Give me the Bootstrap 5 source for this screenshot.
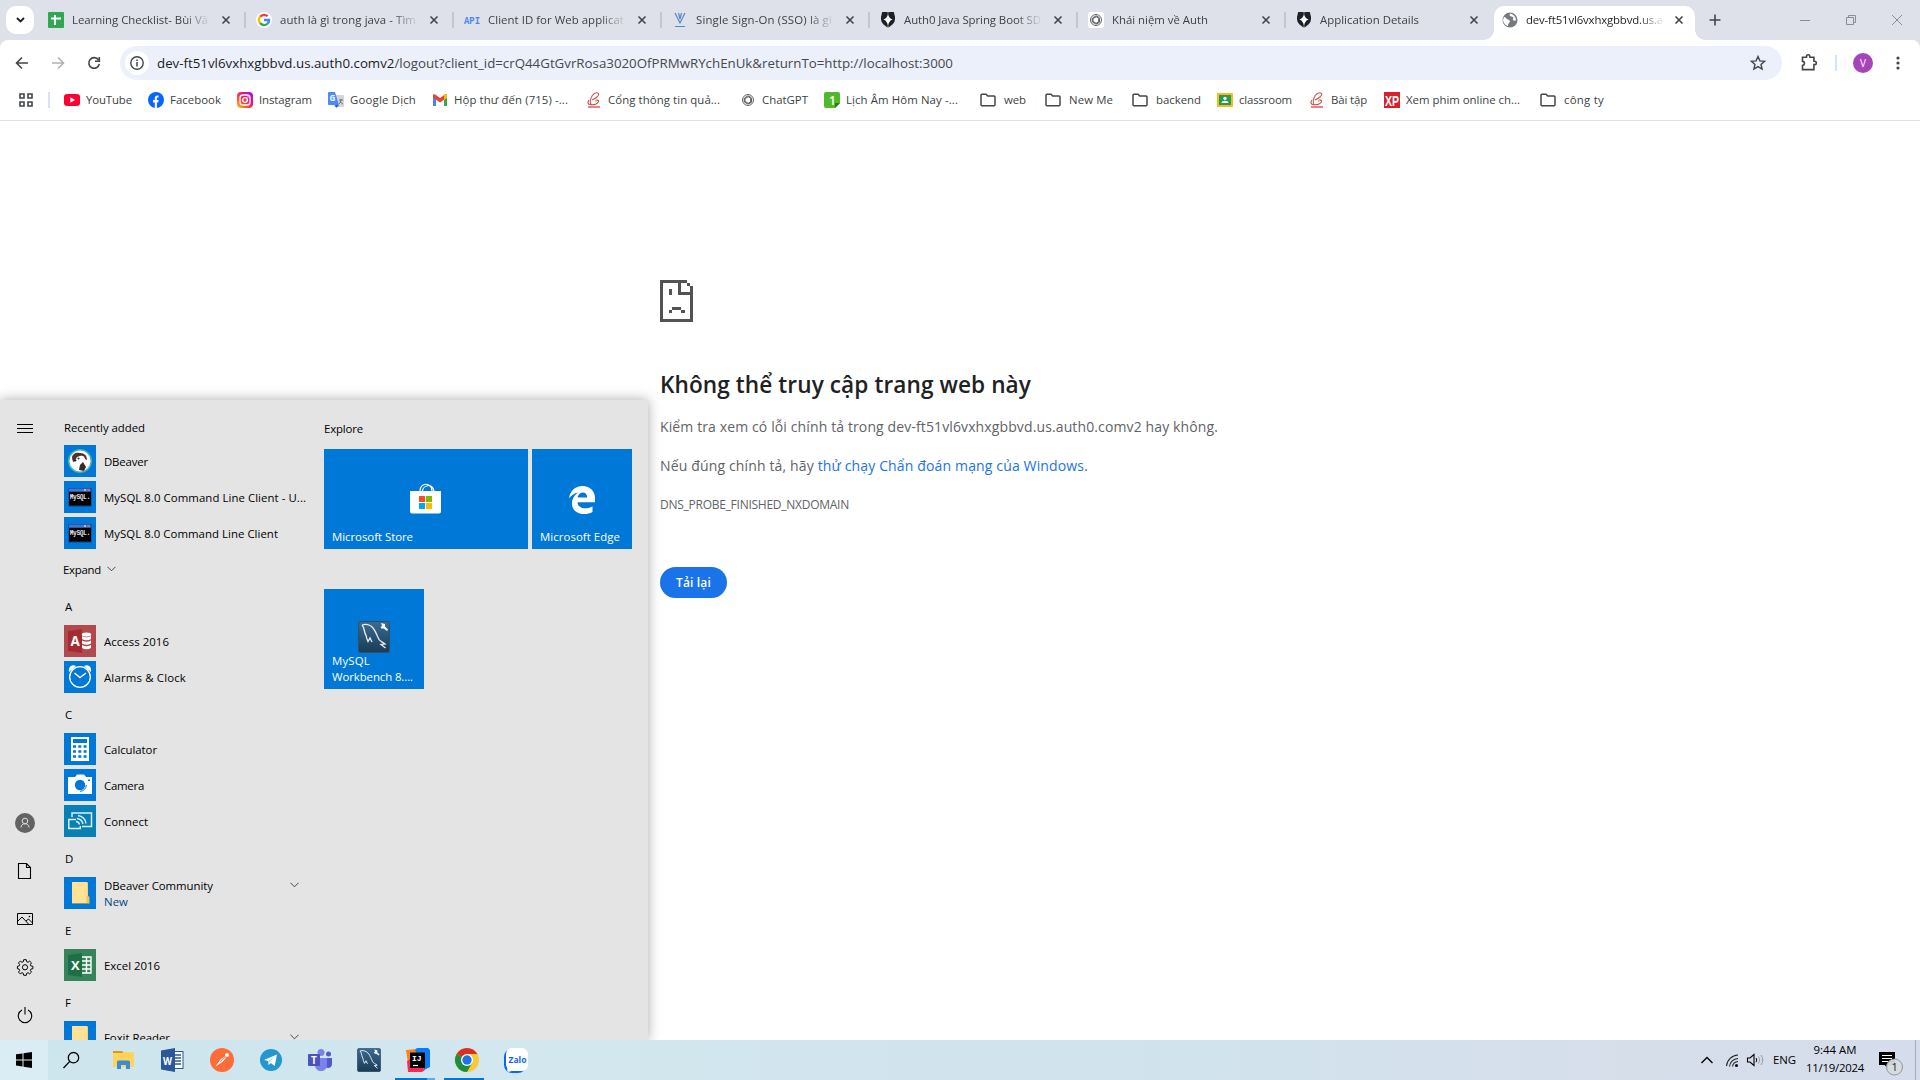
<!DOCTYPE html>
<html lang="vi">
<head>
<meta charset="utf-8">
<title>dev-ft51vl6vxhxgbbvd.us.auth0.comv2</title>
<link rel="stylesheet" href="https://cdn.jsdelivr.net/npm/bootstrap@5.3.0/dist/css/bootstrap.min.css">
<style>
body{width:1920px;height:1080px;overflow:hidden;font-family:"Open Sans","Noto Sans",sans-serif;font-size:11.4px;line-height:16px;color:#3c3f43;background:#fff}
svg{display:block;flex:none;overflow:visible}
[data-w]{display:inline-block;white-space:nowrap}
.tabstrip{height:40px;background:#dee1e9;padding-left:6px}
.tab-search{width:28px;height:28px;border-radius:10px;background:#fff;margin-right:3px}
.tab{width:208px;height:28px;padding-left:11px;padding-right:14px;gap:8px}
.tab.sep{position:relative}
.tab.sep::after{content:"";position:absolute;right:-1px;top:6px;width:2px;height:16px;background:#c3c7d0;border-radius:1px}
.tab-label{width:137px;-webkit-mask-image:linear-gradient(90deg,#000 112px,transparent 139px)}
.tab-on{width:201px;height:34px;margin-left:1px;padding-left:8px;padding-right:11px;padding-bottom:6px;background:#fff;border-radius:10px 10px 0 0;color:#1f1f1f;position:relative;align-self:flex-end}
.tab-on::before,.tab-on::after{content:"";position:absolute;bottom:0;width:10px;height:10px}
.tab-on::before{left:-10px;background:radial-gradient(circle at 0 0,transparent 9.5px,#fff 10px)}
.tab-on::after{right:-10px;background:radial-gradient(circle at 100% 0,transparent 9.5px,#fff 10px)}
.toolband{background:#dee1e9}
.toolbar-row{height:46px;background:#fff;border-radius:8px 8px 0 0;padding:0 16px 0 14px}
.omni{width:1662px;height:34px;border-radius:17px;background:#ecf0fa;padding:0 16px 0 5px;font-size:13.3px;color:#45484d}
.omni b{font-weight:400;color:#1b1c1e}
.site-info{width:24px;height:24px;border-radius:50%;background:#fff;margin-right:8px}
.vbar{width:2px;height:16px;background:#d3e3fd}
.profile{width:20px;height:20px;border-radius:50%;background:#a744b9;color:#fff;font-size:10px}
.bookmarks{height:35px;padding:0 0 6px 19px;border-bottom:1px solid #dfe1e5;box-sizing:border-box;font-size:11.4px}
.bookmarks .bm{gap:6px}
.bookmarks .fold{gap:8px}
.errpage{padding:159px 0 0 660px}
.errpage h1{font-size:22.6px;line-height:30px;font-weight:600;color:#202124;margin:48px 0 17px}
.errpage p{font-size:14px;line-height:20px;margin:0 0 19px;color:#5f6368}
.errpage a{color:#1a73e8;text-decoration:none}
.reload{width:67px;height:31px;border-radius:16px;background:#1a73e8;color:#fff;font-size:12px;font-weight:600;margin-top:52px}
.start{position:absolute;left:0;top:400px;width:648px;height:640px;background:#e4e4e4;color:#000;overflow:hidden;z-index:2}
.start-shade{position:absolute;left:0;top:400px;width:648px;height:640px;box-shadow:0 0 12px rgba(0,0,0,.34);z-index:1}
.rail{width:50px;padding:24px 0 17px}
.apps{width:274px;padding-left:14px;padding-top:20px}
.row36{height:36px;gap:8px;flex:none}
.row36>span{padding-top:1px}
.letter{padding:4px 0 0 1px}
.tile32{width:32px;height:32px;background:#0078d7}
.tiles{padding-top:21px;width:308px}
.tile{background:#0078d7;color:#fff;height:100px;padding:0 8px 4px}
.taskbar{position:absolute;left:0;top:1040px;width:1920px;height:40px;background:linear-gradient(90deg,#cde5ed 0,#d3e7ef 30%,#d0e3ed 60%,#d6deea 85%,#d5ddec 100%);color:#000;z-index:3}
.tb{width:49px;height:40px}
.tb.running{position:relative}
.tb.running::after{content:"";position:absolute;left:4px;bottom:0;width:40px;height:2px;background:#0078d7}
.tb.multi::after{background:linear-gradient(90deg,#0078d7 32px,#61a9e0 32px)}
</style>
<script src="https://cdn.jsdelivr.net/npm/bootstrap@5.3.0/dist/js/bootstrap.bundle.min.js"></script>
</head>
<body>
<svg width="0" height="0" class="position-absolute">
<defs>
<symbol id="x" viewBox="0 0 10 10"><path d="M1.500 1.500l7 7M8.500 1.500l-7 7" stroke="#42464b" stroke-width="1.600"/></symbol>
<symbol id="auth" viewBox="0 0 16 16"><path d="M2.200 0h11.600L15 5c.3 3-.6 5.500-2.600 7.500L8 16l-4.400-3.500C1.600 10.500.7 8 1 5z" fill="#1f2023"/><path d="M8 2c.7 3.200 2 4.700 4.600 5.300C10 8.500 8.700 10.500 8 14c-.7-3.500-2-5.500-4.600-6.700C6 6.700 7.300 5.200 8 2z" fill="#fff"/><path d="M7.600 0h.8L8 3zM8 13l.7 3H7.300z" fill="#dee1e9"/></symbol>
<symbol id="gpt" viewBox="0 0 16 16"><g fill="none" stroke="#4d4f52" stroke-width="1"><circle cx="8" cy="8" r="6.300"/><g id="petal"><path d="M4.600 5.200V9.600L8 11.600M4.600 5.200L8.200 3.200 12 5.400"/></g><use href="#petal" transform="rotate(120 8 8)"/><use href="#petal" transform="rotate(240 8 8)"/></g></symbol>
<symbol id="folder" viewBox="0 0 16 16"><path d="M1 3.200a1 1 0 011-1h4l1.700 1.900h6.300a1 1 0 011 1v7.700a1 1 0 01-1 1H2a1 1 0 01-1-1z" fill="none" stroke="#474747" stroke-width="1.500"/></symbol>
<symbol id="chev" viewBox="0 0 10 6"><path d="M.5.5L5 5 9.500.5" fill="none" stroke="#333" stroke-width="1"/></symbol>
<symbol id="ptit" viewBox="0 0 16 16"><path d="M12.500 1.500C10-.5 6.500 2 5 6c-1 3-1 5.500.5 7M12.500 1.500c1 2-2 4.500-6.500 6.500" fill="none" stroke="#d05a5a" stroke-width="1.100"/><path d="M3 8c-1.500 2-1.500 4 1 4.500 4 .8 8-.5 8.500-3 .2-1.500-1.500-2-3-.5" fill="none" stroke="#c24a4c" stroke-width="1.100"/><path d="M2 15h12" stroke="#d33" stroke-width="1.200"/><path d="M9 8.500h2" stroke="#eab52b" stroke-width="1.600"/></symbol>
<symbol id="dolphin" viewBox="0 0 32 32"><defs><linearGradient id="dg" x2="0" y2="1"><stop stop-color="#3c6b93"/><stop offset="1" stop-color="#1a3b54"/></linearGradient></defs><rect x=".5" y=".5" width="31" height="31" rx="2.500" fill="url(#dg)" stroke="#28506f"/><path d="M4 4c4-1.200 8-.2 11 3 3 3.500 4 8 6 11.500 1 1.800 3.500 2.500 6 4.500l-4 .4 4.500 3.600M4 4c2 2 2 5 3 8 .6 2 1.700 3 1.600 5l1.400 3.500 2-3.500 2 4" fill="none" stroke="#e4eef5" stroke-width="1.300"/><path d="M23 2l1 3-1.500 1 1.200 1.800 2-.2L29 10l1-1.500-3-3L27 3z" fill="#f4f8fa"/></symbol>
<symbol id="mysqlcmd" viewBox="0 0 32 32"><rect x="4.500" y="7" width="23" height="18.500" fill="#173f80"/><rect x="5" y="7.500" width="21.500" height="3" fill="#3d77ce"/><rect x="20" y="8" width="2" height="2" fill="#a8bce5"/><rect x="23.500" y="8" width="2.500" height="2" fill="#e26a4b"/><rect x="5" y="11" width="22" height="13.500" fill="#000"/><text x="6" y="17.500" font-size="6.500" font-family="Liberation Mono,monospace" fill="#fff" stroke="#fff" stroke-width=".2" textLength="20" lengthAdjust="spacingAndGlyphs">MySQL.</text></symbol>
<symbol id="yfold" viewBox="0 0 32 32"><path d="M8 6h16v13l1.500 1v6.500H8z" fill="#f0c45c"/><path d="M8 5h15.500v13.500l-1 1.200V26H8z" fill="#ffe294"/></symbol>
</defs></svg>

<header>
<div class="tabstrip d-flex align-items-center">
 <div class="tab-search d-flex align-items-center justify-content-center"><svg width="9" height="6" viewBox="0 0 9 6"><path d="M1 1l3.500 3.500L8 1" fill="none" stroke="#1f1f1f" stroke-width="1.800"/></svg></div>
 <div class="tab sep d-flex align-items-center"><svg width="16" height="16"><rect width="16" height="16" rx="1" fill="#2fa84f"/><path d="M7 3v10M3 6.500h10" stroke="#fff" stroke-width="2"/></svg><div class="tab-label"><span data-w="136">Learning Checklist- Bùi Vă</span></div><svg class="ms-auto" width="10" height="10"><use href="#x"/></svg></div>
 <div class="tab sep d-flex align-items-center"><svg width="16" height="16"><circle cx="8" cy="8" r="8" fill="#fff"/><g fill="none" stroke-width="2.400"><path d="M11.600 4.200A5 5 0 004.200 4.800" stroke="#ea4335"/><path d="M4.200 4.800a5 5 0 00-.1 6.300" stroke="#fbbc05"/><path d="M4.100 11.100a5 5 0 007.200.8" stroke="#34a853"/><path d="M11.300 11.900A5 5 0 0013 8H8" stroke="#4285f4"/></g></svg><div class="tab-label"><span data-w="136">auth là gì trong java - Tìm</span></div><svg class="ms-auto" width="10" height="10"><use href="#x"/></svg></div>
 <div class="tab sep d-flex align-items-center"><svg width="16" height="16"><text x="0" y="12" font-family="Liberation Mono,monospace" font-weight="700" font-size="11" fill="#4d86ec" textLength="16" lengthAdjust="spacingAndGlyphs">API</text></svg><div class="tab-label"><span data-w="136">Client ID for Web applicat</span></div><svg class="ms-auto" width="10" height="10"><use href="#x"/></svg></div>
 <div class="tab sep d-flex align-items-center"><svg width="16" height="16"><path d="M3 1l5 10 5-10M6.500 1L8 7l1.500-6M3 14.500h10" fill="none" stroke="#5488c7" stroke-width="1.200"/></svg><div class="tab-label"><span data-w="136">Single Sign-On (SSO) là gì</span></div><svg class="ms-auto" width="10" height="10"><use href="#x"/></svg></div>
 <div class="tab sep d-flex align-items-center"><svg width="16" height="16"><use href="#auth"/></svg><div class="tab-label"><span data-w="137">Auth0 Java Spring Boot SD</span></div><svg class="ms-auto" width="10" height="10"><use href="#x"/></svg></div>
 <div class="tab sep d-flex align-items-center"><svg width="16" height="16"><rect width="16" height="16" rx="3" fill="#fff"/><use href="#gpt" x="1" y="1" width="14" height="14"/></svg><div class="tab-label"><span data-w="96">Khái niệm về Auth</span></div><svg class="ms-auto" width="10" height="10"><use href="#x"/></svg></div>
 <div class="tab d-flex align-items-center"><svg width="16" height="16"><use href="#auth"/></svg><div class="tab-label"><span data-w="99">Application Details</span></div><svg class="ms-auto" width="10" height="10"><use href="#x"/></svg></div>
 <div class="tab tab-on d-flex align-items-center"><svg width="16" height="16"><circle cx="8" cy="8" r="7.500" fill="#76797d"/><path d="M2 5c2 0 2 2 4 2.500S8.500 10 7 11s-.5 3-1.500 3C3 13 1 10.500 1 8M8 1.500c-1 2 0 3 1.500 3S12 6 11 7s1 2 3 1.500c0-3-2-6-6-7" fill="#fff"/></svg><div class="tab-label"><span data-w="137">dev-ft51vl6vxhxgbbvd.us.a</span></div><svg class="ms-auto" width="10" height="10"><use href="#x"/></svg></div>
 <svg class="ms-auto" width="212" height="40"><path d="M7 14.500v11M1.500 20h11" stroke="#42464b" stroke-width="1.600"/><g fill="none" stroke="#8a8d93"><path d="M92 20.500h10M138.500 17.500h7v7h-7zM140.500 17v-1.500h7v7H146M184 15l10 10M194 15l-10 10"/></g></svg>
</div>
<div class="toolband">
<div class="toolbar-row d-flex align-items-center">
 <svg width="106" height="34"><g fill="none" stroke="#42464b" stroke-width="1.600"><path d="M14 17H3M8 11.500L2.500 17 8 22.500"/><path d="M38 17h11M44 11.500l5.500 5.500-5.500 5.500" stroke="#b0b2b6"/><path d="M84.500 14A5.300 5.300 0 1085.300 18"/><path d="M85.300 11v4.300H81"/></g></svg>
 <div class="omni d-flex align-items-center"><div class="site-info d-flex align-items-center justify-content-center"><svg width="14" height="14"><circle cx="7" cy="7" r="6.200" fill="none" stroke="#42464b" stroke-width="1.400"/><path d="M7 6v4.500M7 3.500v1.500" stroke="#42464b" stroke-width="1.500"/></svg></div>
 <span data-w="796"><b>dev-ft51vl6vxhxgbbvd.us.auth0.comv2</b>/logout?client_id=crQ44GtGvrRosa3020OfPRMwRYchEnUk&amp;returnTo=http://localhost:3000</span>
 <svg class="ms-auto" width="16" height="16"><path d="M8 1.500l1.900 4.400 4.700.4-3.600 3.100 1.100 4.700L8 11.600l-4.100 2.500L5 9.400 1.400 6.300l4.700-.4z" fill="none" stroke="#42464b" stroke-width="1.400"/></svg></div>
 <svg style="margin-left:19px" width="20" height="20"><path d="M1.500 4.200h4V3.500a1.700 1.700 0 013.400 0v.7h4v4h.7a1.700 1.700 0 010 3.400h-.7v5H1.500v-4.200c2.600-.3 2.600-3.700 0-4z" fill="none" stroke="#42464b" stroke-width="1.600"/></svg>
 <div class="vbar" style="margin:0 16px 0 14px"></div>
 <div class="profile d-flex align-items-center justify-content-center">V</div>
 <svg class="ms-auto me-1" width="8" height="16"><g fill="#42464b"><circle cx="6" cy="3" r="1.600"/><circle cx="6" cy="8" r="1.600"/><circle cx="6" cy="13" r="1.600"/></g></svg>
</div></div>
<div class="bookmarks d-flex align-items-center">
 <svg width="14" height="14"><g fill="none" stroke="#42464b" stroke-width="1.600"><path d="M1 1h4v4H1zM9 1h4v4H9zM1 9h4v4H1zM9 9h4v4H9z"/></g></svg>
 <div class="vbar" style="margin:0 14px 0 15px"></div>
 <div class="bm d-flex align-items-center" data-cell="84"><svg width="16" height="16"><rect y="2" width="16" height="12" rx="3" fill="#f03"/><path d="M6.300 5.300v5.400L11 8z" fill="#fff"/></svg><span data-w="46">YouTube</span></div>
 <div class="bm d-flex align-items-center" data-cell="89"><svg width="16" height="16"><circle cx="8" cy="8" r="8" fill="#0866ff"/><path d="M6.800 16v-5.500H5V8h1.800V6.300c0-2.200 1.200-3.200 3.700-2.800v2c-1.300-.1-1.700.2-1.700 1.200V8h1.800l-.4 2.500H8.900V16z" fill="#fff"/></svg><span data-w="51">Facebook</span></div>
 <div class="bm d-flex align-items-center" data-cell="91"><svg width="16" height="16"><defs><linearGradient id="ig" x1="0" y1="1" x2="1" y2="0"><stop stop-color="#fec53e"/><stop offset=".35" stop-color="#fb4f25"/><stop offset=".65" stop-color="#e0148a"/><stop offset="1" stop-color="#8a1bff"/></linearGradient></defs><rect width="16" height="16" rx="4" fill="url(#ig)"/><rect x="3" y="3" width="10" height="10" rx="3" fill="none" stroke="#fff" stroke-width="1.300"/><circle cx="8" cy="8" r="2.300" fill="none" stroke="#fff" stroke-width="1.300"/><circle cx="11" cy="5" r=".7" fill="#fff"/></svg><span data-w="53">Instagram</span></div>
 <div class="bm d-flex align-items-center" data-cell="104"><svg width="16" height="16"><rect x="6" y="3" width="10" height="12" rx="1" fill="#d3d5d9"/><path d="M1 0h6l4 13H1a1 1 0 01-1-1V1a1 1 0 011-1z" fill="#4b8bf5"/><path d="M8 16l3-3H7z" fill="#1a59c6"/><text x="1.500" y="9" font-size="8" font-weight="700" fill="#fff">G</text><path d="M11 8h4M13 7c0 3-1 4-2 5M12 9c1 2 2 2.500 3 3" stroke="#6b7177" fill="none"/></svg><span data-w="66">Google Dịch</span></div>
 <div class="bm d-flex align-items-center" data-cell="154"><svg width="16" height="16"><path d="M1 14V4l3 2v8z" fill="#4285f4"/><path d="M15 14V4l-3 2v8z" fill="#34a853"/><path d="M1 5.500V3.500C1 2 2.500 2 3.500 2.700L8 6l4.500-3.300C13.500 2 15 2 15 3.500v2L8 10.500z" fill="#ea4335"/><path d="M12 3v5l3-2.300V3.500C15 2 13.500 2 12 3z" fill="#fbbc04"/></svg><span data-w="114">Hộp thư đến (715) -...</span></div>
 <div class="bm d-flex align-items-center" data-cell="154"><svg width="16" height="16"><use href="#ptit"/></svg><span data-w="112">Cổng thông tin quả...</span></div>
 <div class="bm d-flex align-items-center" data-cell="84"><svg width="16" height="16"><use href="#gpt" x="1" y="1" width="14" height="14"/></svg><span data-w="46">ChatGPT</span></div>
 <div class="bm d-flex align-items-center" data-cell="156"><svg width="16" height="16"><path d="M2 0h12a2 2 0 012 2v9l-5 5H2a2 2 0 01-2-2V2a2 2 0 012-2z" fill="#4fb82b"/><path d="M16 11l-5 5v-5z" fill="#2b7a15"/><text x="5" y="13" font-size="12" font-weight="600" fill="#fff">1</text></svg><span data-w="112">Lịch Âm Hôm Nay -...</span></div>
 <div class="bm fold d-flex align-items-center" data-cell="65"><svg width="16" height="16"><use href="#folder"/></svg><span data-w="22">web</span></div>
 <div class="bm fold d-flex align-items-center" data-cell="87"><svg width="16" height="16"><use href="#folder"/></svg><span data-w="44">New Me</span></div>
 <div class="bm fold d-flex align-items-center" data-cell="85"><svg width="16" height="16"><use href="#folder"/></svg><span data-w="45">backend</span></div>
 <div class="bm d-flex align-items-center" data-cell="92"><svg width="16" height="16"><rect y="1" width="16" height="14" rx="1" fill="#f9bb1a"/><rect x="2" y="3" width="12" height="10" fill="#259b57"/><circle cx="8" cy="6.300" r="1.600" fill="#fff"/><path d="M4.500 11c0-3 7-3 7 0z" fill="#fff"/></svg><span data-w="53">classroom</span></div>
 <div class="bm d-flex align-items-center" data-cell="75"><svg width="16" height="16"><use href="#ptit"/></svg><span data-w="36">Bài tập</span></div>
 <div class="bm d-flex align-items-center" data-cell="156"><svg width="16" height="16"><rect width="16" height="16" fill="#d8202b"/><text x="1" y="13.500" font-size="14" font-weight="700" font-family="Liberation Sans,sans-serif" fill="#fff" textLength="14" lengthAdjust="spacingAndGlyphs">XP</text></svg><span data-w="114">Xem phim online ch...</span></div>
 <div class="bm fold d-flex align-items-center"><svg width="16" height="16"><use href="#folder"/></svg><span data-w="40">công ty</span></div>
</div>
</header>

<main class="errpage">
 <svg width="33" height="42" viewBox="0 0 33 42"><path fill="#535353" d="M0 0h27v3H3v36h27V15H18V3h3v9h9V6h3v36H0zM27 3h3v3h-3zM9 9h3v6H9zM12 27h9v3h-9zM9 30h3v3H9zM21 30h4v3h-4z"/></svg>
 <h1><span data-w="371">Không thể truy cập trang web này</span></h1>
 <p><span data-w="558">Kiểm tra xem có lỗi chính tả trong dev-ft51vl6vxhxgbbvd.us.auth0.comv2 hay không.</span></p>
 <p><span data-w="428">Nếu đúng chính tả, hãy <a href="#">thử chạy Chẩn đoán mạng của Windows</a>.</span></p>
 <p style="font-size:12px"><span data-w="189">DNS_PROBE_FINISHED_NXDOMAIN</span></p>
 <div class="reload d-flex align-items-center justify-content-center"><span data-w="35">Tải lại</span></div>
</main>

<div class="start-shade"></div>
<section class="start d-flex">
 <nav class="rail d-flex flex-column align-items-center">
  <svg width="16" height="9"><path d="M0 .5h16M0 4.500h16M0 8.500h16" stroke="#000"/></svg>
  <svg class="mt-auto" width="20" height="20"><circle cx="10" cy="10" r="10" fill="#636363"/><g fill="none" stroke="#ddd"><circle cx="10" cy="8" r="2.800"/><path d="M6 14.500c0-5 8-5 8 0"/></g></svg>
  <svg style="margin-top:29px" width="16" height="18"><path d="M1.500 1.500h8l4 4v11h-12zM9.500 1.500v4h4" fill="none" stroke="#000" stroke-width="1.100"/></svg>
  <svg style="margin-top:33px" width="16" height="12"><path d="M.5.500h15v11H.5zM1 8l4-4 6.500 7M9 8l2.500-2 4 4" fill="none" stroke="#000"/><circle cx="12.500" cy="3.500" r=".8"/></svg>
  <svg style="margin-top:34px" width="16" height="16" viewBox="0 0 16 16"><path d="M6.700.7h2.600l.4 2 1.300.6 1.700-1.200 1.800 1.800-1.200 1.700.6 1.300 2 .4v2.400l-2 .4-.6 1.300 1.200 1.700-1.800 1.800-1.700-1.200-1.300.6-.4 2H6.700l-.4-2-1.300-.6-1.700 1.200-1.800-1.800 1.200-1.700-.6-1.300-1.700-.4V7.300l1.700-.4.6-1.300-1.200-1.700 1.800-1.800L5 3.300l1.300-.6z" fill="none" stroke="#000"/><circle cx="8" cy="8.300" r="2.600" fill="none" stroke="#000"/></svg>
  <svg style="margin-top:32px" width="16" height="16"><path d="M5 3A6.700 6.700 0 1011 3M8 0v7.500" fill="none" stroke="#000" stroke-width="1.100"/></svg>
 </nav>
 <div class="apps">
  <div style="height:23px"><span data-w="81">Recently added</span></div>
  <div class="row36 d-flex align-items-center"><svg class="tile32"><circle cx="16" cy="16" r="11.300" fill="#fff" stroke="#44afb2" stroke-width="1.500"/><path d="M8 13c0-4 4-6 8-5 5 0 7 3 7 7l-2-1c0-3-3-4-5-3l-3 1-2 4-2 1z" fill="#4a342b"/><path d="M16 20l3-3 3 5-2 4-5-1z" fill="#392a25"/><circle cx="14.500" cy="13.500" r="1" fill="#222"/><ellipse cx="11" cy="15.500" rx="1.500" ry="1" fill="#222"/></svg><span data-w="44">DBeaver</span></div>
  <div class="row36 d-flex align-items-center"><svg class="tile32"><use href="#mysqlcmd"/></svg><span data-w="202">MySQL 8.0 Command Line Client - U...</span></div>
  <div class="row36 d-flex align-items-center"><svg class="tile32"><use href="#mysqlcmd"/></svg><span data-w="174">MySQL 8.0 Command Line Client</span></div>
  <div class="row36 d-flex align-items-center" style="margin-left:-1px"><span data-w="38">Expand</span><svg width="9" height="6" style="margin-left:-2px"><use href="#chev"/></svg></div>
  <div class="row36 d-flex align-items-center letter">A</div>
  <div class="row36 d-flex align-items-center"><svg class="tile32"><rect width="32" height="32" fill="#b04a4f"/><path d="M4 6l14-2v24L4 26z" fill="#a4262c" fill-opacity=".85"/><g fill="#fff"><ellipse cx="22.500" cy="9.500" rx="4.700" ry="2"/><path d="M18 11q4.500 2.500 9 0v3q-4.500 2.500-9 0zM18 15.500q4.500 2.500 9 0v3q-4.500 2.500-9 0zM18 20q4.500 2.500 9 0v3q-4.500 2.500-9 0z"/></g><text x="6.500" y="21" font-size="13.500" font-weight="700" fill="#fff">A</text></svg><span data-w="65">Access 2016</span></div>
  <div class="row36 d-flex align-items-center"><svg class="tile32"><g fill="none" stroke="#fff" stroke-width="1.300"><circle cx="16" cy="16" r="10.300"/><path d="M10.500 12l5.500 4.500 6-4.500" stroke-width="1.500"/></g><path d="M5 11c-1-5 3-8 7-6zM27 11c1-5-3-8-7-6z" fill="#fff"/></svg><span data-w="82">Alarms &amp; Clock</span></div>
  <div class="row36 d-flex align-items-center letter">C</div>
  <div class="row36 d-flex align-items-center"><svg class="tile32"><rect x="7" y="4" width="18" height="24" fill="#fff"/><rect x="9" y="6" width="14" height="4" fill="#0078d7"/><path d="M9 13.500h14M9 18.500h14M9 23.500h14" stroke="#0078d7" stroke-width="2.500" stroke-dasharray="3 2.300"/></svg><span data-w="53">Calculator</span></div>
  <div class="row36 d-flex align-items-center"><svg class="tile32"><path d="M4 8h7l2-2.500h7L22 8h6v17H4z" fill="#fff"/><circle cx="16" cy="16" r="5.200" fill="#0078d7"/><path d="M16 22.300a6.300 6.300 0 006.300-6.300" fill="none" stroke="#0078d7"/><rect x="24" y="10.500" width="2" height="1.500" fill="#0078d7"/></svg><span data-w="40">Camera</span></div>
  <div class="row36 d-flex align-items-center"><svg class="tile32"><rect width="32" height="32" fill="#087fb5"/><g fill="none" stroke="#d9eef7" stroke-width="1.500"><path d="M8 12V8h19.500v13.500H18M12 14.500H4.800v9h11.500V21"/><path d="M12 16.500a4 4 0 013.500 3M13 13.500a7 7 0 016 5.500M14 10.500a9 9 0 018 8"/></g></svg><span data-w="44">Connect</span></div>
  <div class="row36 d-flex align-items-center letter">D</div>
  <div class="row36 d-flex align-items-center"><svg class="tile32"><use href="#yfold"/></svg><div class="pt-1" style="margin-top:-2px"><span data-w="109">DBeaver Community</span><div style="color:#00457c"><span data-w="24">New</span></div></div><svg style="margin:-17px 25px 0 auto" width="9" height="6"><use href="#chev"/></svg></div>
  <div class="row36 d-flex align-items-center letter">E</div>
  <div class="row36 d-flex align-items-center"><svg class="tile32"><rect width="32" height="32" fill="#37845c"/><path d="M4 6l14-2v24L4 26z" fill="#1d7044"/><path d="M18 8h9v16h-9M18 12h9M18 16h9M18 20h9M22.500 8v16" fill="none" stroke="#fff" stroke-width="1.400"/><text x="7" y="21" font-size="13" font-weight="700" fill="#fff">X</text></svg><span data-w="56">Excel 2016</span></div>
  <div class="row36 d-flex align-items-center letter">F</div>
  <div class="row36 d-flex align-items-center"><svg class="tile32"><use href="#yfold"/></svg><span data-w="66">Foxit Reader</span><svg style="margin:0 25px 0 auto" width="9" height="6"><use href="#chev"/></svg></div>
 </div>
 <div class="tiles">
  <div style="height:28px"><span data-w="39">Explore</span></div>
  <div class="d-flex gap-1" style="margin-bottom:40px">
   <div class="tile d-flex flex-column justify-content-end" style="width:204px"><svg style="margin:0 0 15px 78px" width="31" height="31"><path d="M10 8c0-9 12-9 12 0M12.500 8c0-5 10-9 11.500 0" fill="none" stroke="#fff" stroke-width="1.200"/><path d="M0 8h31v20.500a2 2 0 01-2 2H2a2 2 0 01-2-2z" fill="#fff"/><path d="M9 13h6v6H9z" fill="#f25022"/><path d="M16 13h6v6h-6z" fill="#7fba00"/><path d="M9 20h6v6H9z" fill="#00a4ef"/><path d="M16 20h6v6h-6z" fill="#ffb900"/></svg><span data-w="81">Microsoft Store</span></div>
   <div class="tile d-flex flex-column justify-content-end" style="width:100px"><svg style="margin:0 0 15px 29px" width="26" height="28" viewBox="0 0 26 28"><path d="M0 12.500C1 5 6 0 13.500 0 21 0 26 5 26 12v4.300H8.500c.3 6.500 9.500 7.700 15 4v5.700C15 30.500 3 27.500 3 17.500 3 12 6 8.500 9.500 6.500 5 7.300 1.800 9.500 0 12.500zm8.600-1h9.600c0-7.200-8.800-6.400-9.600 0z" fill="#fff"/></svg><span data-w="80">Microsoft Edge</span></div>
  </div>
  <div class="tile d-flex flex-column justify-content-end" style="width:100px"><svg class="mx-auto" width="32" height="32"><use href="#dolphin"/></svg><span data-w="38">MySQL</span><span data-w="81">Workbench 8....</span></div>
 </div>
</section>

<footer class="taskbar d-flex align-items-center">
 <div class="tb d-flex align-items-center justify-content-center" style="width:48px;background:#daedf4"><svg width="16" height="16"><path d="M0 2.300L6.500 1.400v6H0zM7.500 1.200L16 0v7.400H7.500zM0 8.500h6.500v6L0 13.600zM7.500 8.500H16V16l-8.500-1.200z"/></svg></div>
 <div class="tb d-flex align-items-center justify-content-center pe-1"><svg width="16" height="17"><circle cx="10.500" cy="5.700" r="5.200" fill="none" stroke="#000" stroke-width="1.300"/><path d="M6.800 9.400L.5 16" stroke="#000" stroke-width="1.300"/></svg></div>
 <div class="tb d-flex align-items-center justify-content-center ps-1"><svg width="22" height="20"><path d="M0 1h9l2 2H0z" fill="#d99a14"/><path d="M0 3h10l1-1h10v15H0z" fill="#ffd35c"/><path d="M4 19v-7a1.500 1.500 0 011.500-1.500h10A1.500 1.500 0 0117 12v7h-4v-4H8v4z" fill="#3a8dd4"/></svg></div>
 <div class="tb d-flex align-items-center justify-content-center ps-1"><svg width="23" height="24"><rect x="12.500" y="3.500" width="9.500" height="17" fill="#fff" stroke="#2b579a"/><path d="M13 7h7M13 10h7M13 13h7M13 16h7" stroke="#2b579a" stroke-width="1.300"/><path d="M0 2.500L14 0v24L0 21.500z" fill="#2b579a"/><text x="2" y="16.500" font-size="11" font-weight="700" fill="#fff" textLength="9" lengthAdjust="spacingAndGlyphs">W</text></svg></div>
 <div class="tb d-flex align-items-center justify-content-center ps-1"><svg width="24" height="24"><circle cx="12" cy="12" r="12" fill="#ff6c37"/><path d="M5.500 18.500l4.500-6.500 4.500-3.500 1.500 1.300-3.500 4z" fill="#fff"/><circle cx="17" cy="7" r="2" fill="#fff"/><path d="M10 14l5-5" stroke="#ff6c37" stroke-width=".8"/></svg></div>
 <div class="tb d-flex align-items-center justify-content-center ps-1"><svg width="22" height="22"><circle cx="11" cy="11" r="11" fill="#2496d0"/><path d="M4 11l13-5.500-2.300 11.500-4-3-2 2-.5-4z" fill="#fff"/><path d="M8.200 12l6-4-4.500 5.300-1 2.700z" fill="#b9dcee"/></svg></div>
 <div class="tb d-flex align-items-center justify-content-center ps-1"><svg width="24" height="22"><circle cx="20.500" cy="5" r="2.500" fill="#5059c9"/><path d="M17 9h7v6c0 4-4 5-7 3z" fill="#5059c9"/><circle cx="13" cy="3.500" r="3.500" fill="#7b83eb"/><path d="M7 9h12v7c0 8-12 8-12 0z" fill="#7b83eb"/><rect y="5" width="12" height="12" rx="1" fill="#4b53bc"/><text x="3" y="14.500" font-size="10" font-weight="700" fill="#fff">T</text></svg></div>
 <div class="tb d-flex align-items-center justify-content-center ps-1"><svg width="24" height="24"><use href="#dolphin"/></svg></div>
 <div class="tb running multi d-flex align-items-center justify-content-center ps-1"><svg width="24" height="25"><path d="M0 2l11-1-4 14H2z" fill="#fc801d"/><path d="M9 2l2-2h11l2 2v17l-6 3z" fill="#087cfa"/><path d="M1 13l6-3 12 12-3 2H2z" fill="#fe2857"/><rect x="4" y="4.500" width="15" height="15.500"/><text x="6" y="12.500" font-size="8" font-weight="700" font-family="Liberation Mono,monospace" fill="#fff">IJ</text><path d="M7 17.500h5" stroke="#fff" stroke-width="1.200"/></svg></div>
 <div class="tb running d-flex align-items-center justify-content-center ps-1"><svg width="24" height="24"><circle cx="12" cy="12" r="12" fill="#fcc934"/><path d="M12 12L1.600 6A12 12 0 0122.400 6z" fill="#d93025"/><path d="M12 12L1.600 6A12 12 0 0012 24l5.200-9z" fill="#1e8e3e"/><path d="M12 6h10.400L17.200 15 12 24l5.200-9z" fill="#fcc934"/><circle cx="12" cy="12" r="6" fill="#fff"/><circle cx="12" cy="12" r="4.700" fill="#1a73e8"/></svg></div>
 <div class="tb d-flex align-items-center justify-content-center ps-1"><svg width="24" height="25"><rect y="1" width="22" height="24" rx="8" fill="#0068ff"/><path d="M8 0h10a6 6 0 016 6v11a6 6 0 01-6 6H8c-3 1-4 1-5 0 1-1 0-3-1-6V7c0-4 2-7 6-7z" fill="#fff"/><text x="4.500" y="15" font-size="8.500" font-weight="700" fill="#1069ee" textLength="18" lengthAdjust="spacingAndGlyphs">Zalo</text></svg></div>
 <div class="ms-auto d-flex align-items-center h-100" style="width:220px">
  <svg width="73" height="20"><path d="M1.500 13L7 7.500 12.500 13" fill="none" stroke="#000" stroke-width="1.300"/><g fill="none" stroke="#222" stroke-width="1.100"><path d="M26.500 16A12 12 0 0138 5M29.500 16.500A9 9 0 0138 8.500M32.500 16.500A6 6 0 0138 11.500"/></g><circle cx="36.500" cy="15.500" r="1.500"/><path d="M47.500 8h2.500l4-3.500v11L50 12h-2.500z" fill="none" stroke="#000" stroke-width="1.100"/><path d="M56 8q1.500 2 0 4.200" stroke="#000" fill="none"/><path d="M58.500 6.500q2.500 3.500 0 7M61 5q3.500 5 0 10" stroke="#999" fill="none"/></svg>
  <span data-w="23">ENG</span>
  <div class="text-center" style="width:58px;margin:-2px 2px 0 10px;line-height:18px"><span data-w="43">9:44 AM</span><br><span data-w="58">11/19/2024</span></div>
  <svg style="margin-left:13px" width="26" height="28"><path d="M0 6h16v13H9v3.500L5.500 19H0z"/><path d="M3 9.500h10M3 12.500h10M3 15.500h6" stroke="#fff"/><circle cx="15.500" cy="21" r="8" fill="#d9dbde" stroke="#929599" fill-opacity=".95"/><text x="12.500" y="25" font-size="11" fill="#222">1</text></svg>
  <div class="ms-auto h-100" style="width:5px;border-left:1px solid #a5adb7"></div>
 </div>
</footer>
<script>
// Sets each label's tracking so that it fills its column width exactly.
document.querySelectorAll('[data-cell]').forEach(e=>{e.style.width=e.dataset.cell+'px';e.style.flex='none'});
document.querySelectorAll('[data-w]').forEach(e=>{
  const r=document.createRange(); r.selectNodeContents(e);
  e.style.letterSpacing=((+e.dataset.w-r.getBoundingClientRect().width)/e.textContent.length).toFixed(3)+'px';
});
</script>
</body>
</html>
